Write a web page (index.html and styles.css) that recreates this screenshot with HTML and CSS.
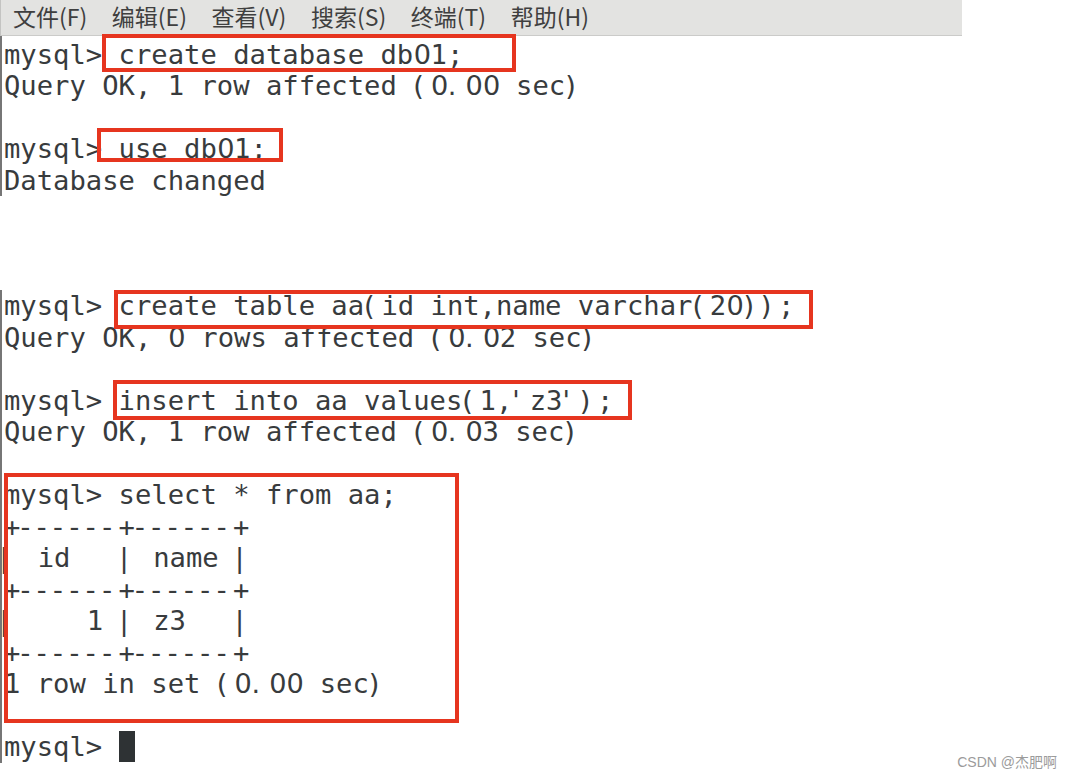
FILE: index.html
```html
<!DOCTYPE html>
<html lang="zh">
<head>
<meta charset="utf-8">
<title>mysql</title>
<link rel="stylesheet" href="styles.css">
</head>
<body>
<div class="screen">
  <nav class="menubar">
    <span class="menu-item">文件(F)</span>
    <span class="menu-item">编辑(E)</span>
    <span class="menu-item">查看(V)</span>
    <span class="menu-item">搜索(S)</span>
    <span class="menu-item">终端(T)</span>
    <span class="menu-item">帮助(H)</span>
  </nav>

  <section class="term term-top">
    <div class="ln">mysql&gt; create database db<span class="z">0</span>1;</div>
    <div class="ln">Query OK, 1 row affected <span class="nb">(</span><span class="z">0</span><span class="nb">.</span><span class="z">0</span><span class="z">0</span> sec<span class="nb">)</span></div>
    <div class="ln"></div>
    <div class="ln">mysql&gt; use db<span class="z">0</span>1;</div>
    <div class="ln">Database changed</div>
  </section>

  <div class="spacer"></div>

  <section class="term">
    <div class="ln">mysql&gt; create table aa<span class="nb">(</span>id int,name varchar<span class="nb">(</span>2<span class="z">0</span><span class="nb">)</span><span class="nb">)</span>;</div>
    <div class="ln">Query OK, <span class="z">0</span> rows affected <span class="nb">(</span><span class="z">0</span><span class="nb">.</span><span class="z">0</span>2 sec<span class="nb">)</span></div>
    <div class="ln"></div>
    <div class="ln">mysql&gt; insert into aa values<span class="nb">(</span>1,<span class="nb">'</span>z3<span class="nb">'</span><span class="nb">)</span>;</div>
    <div class="ln">Query OK, 1 row affected <span class="nb">(</span><span class="z">0</span><span class="nb">.</span><span class="z">0</span>3 sec<span class="nb">)</span></div>
    <div class="ln"></div>
    <div class="ln">mysql&gt; select * from aa;</div>
    <div class="ln">+<span class="dash">------</span>+<span class="dash">------</span>+</div>
    <div class="ln"><span class="nb edge">|</span> id   <span class="nb">|</span> name <span class="nb">|</span></div>
    <div class="ln">+<span class="dash">------</span>+<span class="dash">------</span>+</div>
    <div class="ln"><span class="nb edge">|</span>    1 <span class="nb">|</span> z3   <span class="nb">|</span></div>
    <div class="ln">+<span class="dash">------</span>+<span class="dash">------</span>+</div>
    <div class="ln">1 row in set <span class="nb">(</span><span class="z">0</span><span class="nb">.</span><span class="z">0</span><span class="z">0</span> sec<span class="nb">)</span></div>
    <div class="ln"></div>
    <div class="ln">mysql&gt; <span class="cursor"></span></div>
  </section>

  <div class="mark mark-1"></div>
  <div class="mark mark-2"></div>
  <div class="mark mark-3"></div>
  <div class="mark mark-4"></div>
  <div class="mark mark-5"></div>

  <div class="watermark">CSDN @杰肥啊</div>
</div>
</body>
</html>
```

FILE: styles.css
```css
html, body {
  margin: 0;
  padding: 0;
  background: #ffffff;
}

.screen {
  position: relative;
  width: 1072px;
  height: 780px;
  overflow: hidden;
}

.menubar {
  display: flex;
  align-items: center;
  gap: 24.6px;
  box-sizing: border-box;
  width: 962px;
  height: 36px;
  padding: 0 0 4px 12px;
  background: #e3e3e1;
  border-bottom: 1px solid #cbcbc9;
  border-left: 1px solid #c4c4c2;
  font-family: "Noto Sans CJK SC", "Noto Sans", sans-serif;
  font-size: 23px;
  color: #3f3f3f;
}

.menu-item {
  white-space: nowrap;
  line-height: 30px;
}

.term {
  border-left: 2px solid #767676;
  padding-left: 2px;
  font-family: "DejaVu Sans Mono", "Liberation Mono", monospace;
  font-size: 27.2px;
  line-height: 31.5px;
  color: #383b3d;
}

.term-top {
  padding-top: 2.5px;
}

.ln {
  white-space: pre;
  height: 31.5px;
}

.nb,
.z {
  display: inline-block;
  width: 1ch;
  font-family: "DejaVu Sans", sans-serif;
  font-size: inherit;
  line-height: inherit;
  vertical-align: top;
}

.nb {
  text-align: left;
}

.edge {
  margin-left: -4.5px;
  padding-right: 4.5px;
}

.z {
  text-align: center;
  letter-spacing: -1px;
}

.dash {
  font-family: "DejaVu Sans", sans-serif;
  letter-spacing: 6.55px;
}

.cursor {
  display: inline-block;
  width: 1ch;
  height: 31px;
  vertical-align: top;
  background: #2e3234;
}

.spacer {
  height: 94px;
}

.mark {
  position: absolute;
  box-sizing: border-box;
  border: 4px solid #e6351f;
}

.mark-1 { left: 102px; top: 34px;  width: 414px; height: 38px; }
.mark-2 { left: 97px;  top: 128px; width: 186px; height: 34px; }
.mark-3 { left: 114px; top: 290px; width: 699px; height: 39px; }
.mark-4 { left: 113px; top: 380px; width: 519px; height: 40px; }
.mark-5 { left: 4px;   top: 473px; width: 455px; height: 250px; }

.watermark {
  position: absolute;
  right: 15px;
  top: 753px;
  font-family: "Liberation Sans", "Noto Sans CJK SC", sans-serif;
  font-size: 14px;
  line-height: 18px;
  color: #9b9b9b;
}
```
